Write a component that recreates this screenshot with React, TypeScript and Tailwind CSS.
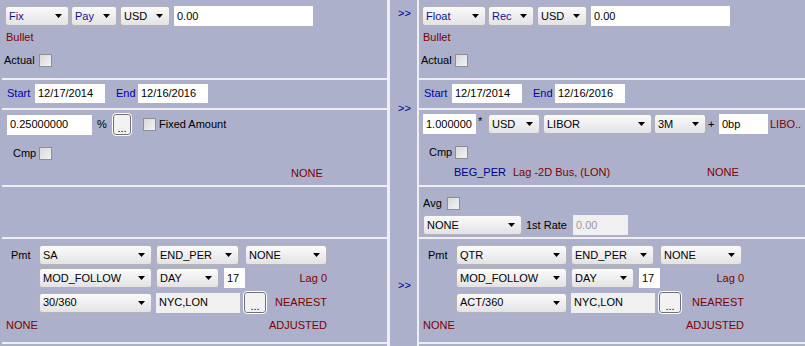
import React from "react";

type Kids = { children?: React.ReactNode };

const Arrow = () => (
  <svg width="7" height="4" viewBox="0 0 7 4" className="shrink-0">
    <path d="M0 0h7L3.5 4z" fill="#000" />
  </svg>
);

const Sel = ({ w, blue, children }: Kids & { w: string; blue?: boolean }) => (
  <div
    className={`flex items-center justify-between h-[20px] shrink-0 ${w} rounded-[3px] border border-[#b3b3b8] bg-linear-to-b from-[#fbfbfb] to-[#e3e3e6] pl-[3px] pr-[6px] ${
      blue ? "text-[#12128a]" : "text-black"
    }`}
  >
    <span className="whitespace-nowrap">{children}</span>
    <Arrow />
  </div>
);

const Field = ({ w, grey, children }: Kids & { w: string; grey?: boolean }) => (
  <div
    className={`flex items-center h-[20px] shrink-0 ${w} px-[3px] whitespace-nowrap ${
      grey ? "bg-[#f0f0f0]" : "bg-white"
    }`}
  >
    {children}
  </div>
);

const Check = () => (
  <div className="w-[13px] h-[13px] shrink-0 border border-[#8e8f8f] bg-linear-to-br from-[#d8d8d8] to-[#f4f4f4]" />
);

const Dots = ({ w }: { w: string }) => (
  <div className={`${w} h-[21px] shrink-0 rounded-[3px] border border-[#707070] bg-[#f2f2f2] outline outline-white flex items-end justify-center pb-[2px] leading-[8px]`}>
    ...
  </div>
);

const Line = () => <div className="h-[2px] bg-[#eeeef3]" />;

const red = "text-[#800000]";

function Header({ a, b, right }: { a: string; b: string; right?: boolean }) {
  return (
    <div className="h-[78px] pt-[6px] pl-[3px]">
      <div className="flex items-center">
        <Sel w="w-[64px]" blue>
          {a}
        </Sel>
        <div className="ml-[2px]">
          <Sel w="w-[46px]" blue>
            {b}
          </Sel>
        </div>
        <div className="ml-[3px]">
          <Sel w="w-[50px]">USD</Sel>
        </div>
        <div className="ml-[4px]">
          <Field w="w-[139px]">0.00</Field>
        </div>
      </div>
      <div className={`mt-[5px] ml-[1px] leading-[13px] ${red}`}>Bullet</div>
      <div className="mt-[10px] -ml-px flex items-center">
        <span className={right ? "w-[34px]" : "w-[35px]"}>Actual</span>
        <Check />
      </div>
    </div>
  );
}

function Dates() {
  return (
    <div className="h-[28px] pt-[4px] pl-[3px] flex items-start">
      <span className="ml-[2px] w-[28px] h-[19px] flex items-center text-[#0000b0]">Start</span>
      <div className="h-[19px] w-[70px] bg-white px-[3px] flex items-center">12/17/2014</div>
      <span className="ml-[11px] w-[22px] h-[19px] flex items-center text-[#0000b0]">End</span>
      <div className="h-[19px] w-[70px] bg-white px-[3px] flex items-center">12/16/2016</div>
    </div>
  );
}

function Pmt({ freq, dc, w1 }: { freq: string; dc: string; w1: string }) {
  return (
    <div className="h-[103px] pt-[6px] pl-[3px]">
      <div className="flex items-center">
        <span className="ml-[6px] w-[28px]">Pmt</span>
        <Sel w={w1}>{freq}</Sel>
        <div className="ml-[4px]">
          <Sel w="w-[83px]">END_PER</Sel>
        </div>
        <div className="ml-[6px]">
          <Sel w="w-[82px]">NONE</Sel>
        </div>
      </div>
      <div className="mt-[3px] w-[322px] flex items-center">
        <div className="ml-[34px]">
          <Sel w={w1}>MOD_FOLLOW</Sel>
        </div>
        <div className="ml-[4px]">
          <Sel w="w-[63px]">DAY</Sel>
        </div>
        <div className="ml-[5px]">
          <Field w="w-[21px]">17</Field>
        </div>
        <span className={`ml-auto ${red}`}>Lag 0</span>
      </div>
      <div className="mt-[4px] w-[322px] flex items-center">
        <div className="ml-[34px]">
          <Sel w={w1}>{dc}</Sel>
        </div>
        <div className="ml-[4px]">
          <Field w="w-[84px]" grey>
            NYC,LON
          </Field>
        </div>
        <div className="ml-[4px]">
          <Dots w="w-[22px]" />
        </div>
        <span className={`ml-auto ${red}`}>NEAREST</span>
      </div>
      <div className="mt-[6px] w-[322px] flex items-center leading-[13px]">
        <span className={`ml-[1px] ${red}`}>NONE</span>
        <span className={`ml-auto ${red}`}>ADJUSTED</span>
      </div>
    </div>
  );
}

function LeftLeg() {
  return (
    <div className="w-[385px] shrink-0 flex flex-col">
      <Header a="Fix" b="Pay" />
      <Line />
      <Dates />
      <Line />
      <div className="h-[75px] pt-[4px] pl-[3px]">
        <div className="flex items-center">
          <div className="ml-[2px]">
            <Field w="w-[85px]">0.25000000</Field>
          </div>
          <span className="ml-[5px] w-[16px]">%</span>
          <Dots w="w-[18px]" />
          <div className="ml-[12px]">
            <Check />
          </div>
          <span className="ml-[3px]">Fixed Amount</span>
        </div>
        <div className="mt-[12px] flex items-center">
          <span className="ml-[8px] w-[26px]">Cmp</span>
          <Check />
        </div>
        <div className={`mt-[7px] ml-[286px] leading-[13px] ${red}`}>NONE</div>
      </div>
      <Line />
      <div className="h-[50px]" />
      <Line />
      <Pmt freq="SA" dc="30/360" w1="w-[113px]" />
      <Line />
    </div>
  );
}

function RightLeg() {
  return (
    <div className="flex-1 flex flex-col">
      <Header a="Float" b="Rec" right />
      <Line />
      <Dates />
      <Line />
      <div className="h-[75px] pt-[4px] pl-[3px]">
        <div className="flex items-center whitespace-nowrap">
          <div className="ml-[1px]">
            <Field w="w-[53px]">1.000000</Field>
          </div>
          <span className="ml-[2px] w-[10px] self-start leading-[14px]">*</span>
          <Sel w="w-[52px]">USD</Sel>
          <div className="ml-[3px]">
            <Sel w="w-[109px]">LIBOR</Sel>
          </div>
          <div className="ml-[2px]">
            <Sel w="w-[52px]">3M</Sel>
          </div>
          <span className="ml-[2px] w-[11px]">+</span>
          <Field w="w-[49px]">0bp</Field>
          <span className={`ml-[2px] ${red}`}>LIBO..</span>
        </div>
        <div className="mt-[12px] flex items-center">
          <span className="ml-[7px] w-[26px]">Cmp</span>
          <Check />
        </div>
        <div className="mt-[7px] flex items-center leading-[13px] whitespace-nowrap">
          <span className="ml-[32px] w-[59px] text-[#00008b]">BEG_PER</span>
          <span className={`w-[194px] ${red}`}>Lag -2D Bus, (LON)</span>
          <span className={red}>NONE</span>
        </div>
      </div>
      <Line />
      <div className="h-[50px] pt-[10px] pl-[3px]">
        <div className="flex items-center">
          <span className="ml-[1px] w-[24px]">Avg</span>
          <Check />
        </div>
        <div className="mt-[5px] flex items-center">
          <div className="ml-[1px]">
            <Sel w="w-[99px]">NONE</Sel>
          </div>
          <span className="ml-[4px] w-[47px]">1st Rate</span>
          <Field w="w-[55px]" grey>
            <span className="text-[#9a9a9a]">0.00</span>
          </Field>
        </div>
      </div>
      <Line />
      <Pmt freq="QTR" dc="ACT/360" w1="w-[111px]" />
      <Line />
    </div>
  );
}

export default function App() {
  return (
    <div className="w-[805px] h-[346px] overflow-hidden bg-[#acb0ca] flex pl-[2px] font-['Liberation_Sans',Arial,sans-serif] text-[11px] leading-[13px] text-black">
      <LeftLeg />
      <div className="w-[3px] shrink-0 bg-[#eeeef3]" />
      <div className="w-[27px] shrink-0 flex flex-col pl-[8px] text-[#00008b]">
        <span className="mt-[7px]">&gt;&gt;</span>
        <span className="mt-[82px]">&gt;&gt;</span>
        <span className="mt-[164px]">&gt;&gt;</span>
      </div>
      <div className="w-[2px] shrink-0 bg-[#eeeef3]" />
      <RightLeg />
    </div>
  );
}
